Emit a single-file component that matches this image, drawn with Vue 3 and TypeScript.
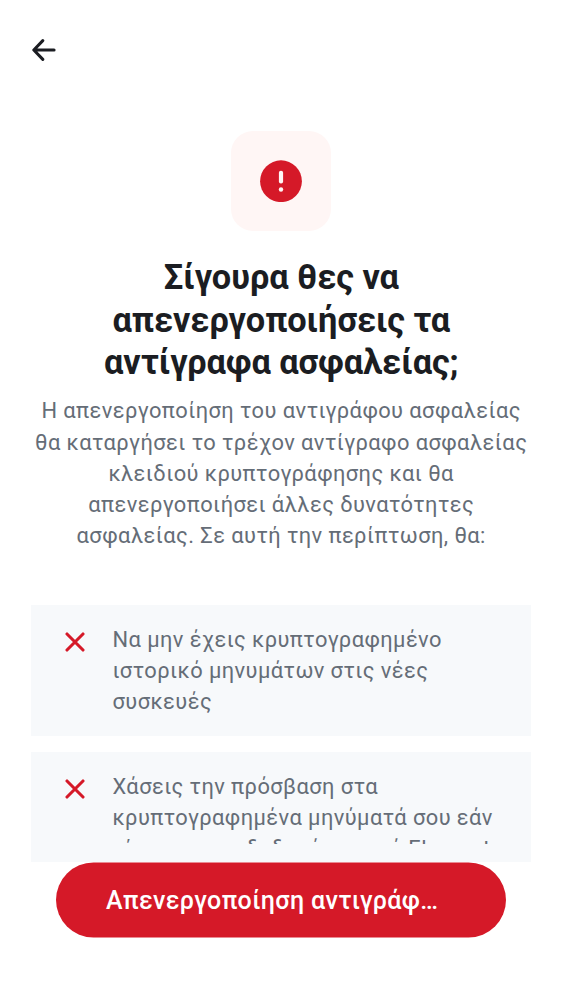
<script setup lang="ts">
interface Consequence {
  lines: string[]
  clipped: boolean
}

const title: string[] = ['Σίγουρα θες να', 'απενεργοποιήσεις τα', 'αντίγραφα ασφαλείας;']

const description: string[] = [
  'Η απενεργοποίηση του αντιγράφου ασφαλείας',
  'θα καταργήσει το τρέχον αντίγραφο ασφαλείας',
  'κλειδιού κρυπτογράφησης και θα',
  'απενεργοποιήσει άλλες δυνατότητες',
  'ασφαλείας. Σε αυτή την περίπτωση, θα:',
]

const consequences: Consequence[] = [
  {
    lines: ['Να μην έχεις κρυπτογραφημένο', 'ιστορικό μηνυμάτων στις νέες', 'συσκευές'],
    clipped: false,
  },
  {
    lines: [
      'Χάσεις την πρόσβαση στα',
      'κρυπτογραφημένα μηνύματά σου εάν',
      'είσαι αποσυνδεδεμένος από Element',
    ],
    clipped: true,
  },
]
</script>

<template>
  <div class="screen">
    <header class="top-bar">
      <svg class="back" viewBox="0 0 24 22" fill="none" stroke="#1b1d22" stroke-width="3" stroke-linecap="round" stroke-linejoin="round">
        <path d="M10.8 1.6 1.8 11l9 9.4M2.5 11h19.6" />
      </svg>
    </header>

    <main class="content">
      <div class="hero">
        <svg viewBox="0 0 42 42">
          <circle cx="21" cy="21.2" r="20.9" fill="#d51928" />
          <rect x="18.9" y="10.8" width="4.2" height="12.6" rx="2" fill="#fff6f6" />
          <circle cx="21" cy="29.5" r="2.2" fill="#fff6f6" />
        </svg>
      </div>
      <h1 class="title">
        <span v-for="line in title" :key="line" class="line">{{ line }}</span>
      </h1>
      <p class="description">
        <span v-for="line in description" :key="line" class="line">{{ line }}</span>
      </p>
      <ul class="list">
        <li v-for="(item, index) in consequences" :key="index" class="item">
          <svg class="cross" viewBox="0 0 20 20" fill="none" stroke="#d51928" stroke-width="3.1" stroke-linecap="round">
            <path d="m2 2 16 16M18 2 2 18" />
          </svg>
          <p class="text" :class="{ clipped: item.clipped }">
            <span v-for="line in item.lines" :key="line" class="line">{{ line }}</span>
          </p>
        </li>
      </ul>
    </main>

    <button class="action" type="button">Απενεργοποίηση αντιγράφ…</button>
  </div>
</template>

<style>
body {
  background: #fff;
}
</style>

<style scoped>
.screen {
  box-sizing: border-box;
  width: 562px;
  height: 1000px;
  display: flex;
  flex-direction: column;
  align-items: center;
  overflow: hidden;
  background: #fff;
  font-family: Roboto, 'Noto Sans', sans-serif;
}
.top-bar {
  box-sizing: border-box;
  width: 100%;
  height: 100px;
  padding-left: 32px;
  display: flex;
  align-items: center;
  flex-shrink: 0;
}
.back {
  width: 24px;
  height: 22px;
}
.content {
  box-sizing: border-box;
  width: 100%;
  height: 762px;
  padding: 31px 31px 0;
  display: flex;
  flex-direction: column;
  align-items: center;
  overflow: hidden;
  flex-shrink: 0;
}
.hero {
  width: 100px;
  height: 100px;
  border-radius: 22px;
  background: #fff6f5;
  display: flex;
  align-items: center;
  justify-content: center;
  flex-shrink: 0;
}
.hero svg {
  width: 42px;
  height: 42px;
}
.line {
  display: block;
  white-space: nowrap;
}
.title {
  margin: 25.3px 0 0;
  color: #1b1d22;
  font-size: 34.375px;
  line-height: 42.2px;
  font-weight: 700;
  letter-spacing: -0.06px;
  text-indent: 0.6px;
  text-align: center;
}
.description {
  margin: 12.5px 0 0;
  color: #656d77;
  font-size: 21.875px;
  line-height: 31.25px;
  letter-spacing: 0.43px;
  text-indent: 0.4px;
  text-align: center;
}
.list {
  width: 500px;
  margin: 53.2px 0 0;
  padding: 0;
  list-style: none;
  display: flex;
  flex-direction: column;
  gap: 16px;
}
.item {
  box-sizing: border-box;
  height: 131px;
  padding: 19px 0 0 34px;
  display: flex;
  align-items: flex-start;
  gap: 27.5px;
  background: #f7f9fb;
}
.cross {
  width: 20px;
  height: 20px;
  margin-top: 8px;
  flex-shrink: 0;
}
.text {
  margin: 0;
  color: #656d77;
  font-size: 21.875px;
  line-height: 31.25px;
  letter-spacing: 0.43px;
}
.clipped {
  height: 73px;
  overflow: hidden;
}
.action {
  box-sizing: border-box;
  width: 450px;
  height: 75px;
  padding: 0 50px;
  border: 0;
  border-radius: 37.5px;
  flex-shrink: 0;
  background: #d51928;
  color: #fff;
  font-family: inherit;
  font-size: 25px;
  font-weight: 500;
  letter-spacing: 0.37px;
  line-height: 37px;
  text-align: left;
  white-space: nowrap;
  transform: translateY(0.5px);
}
</style>
